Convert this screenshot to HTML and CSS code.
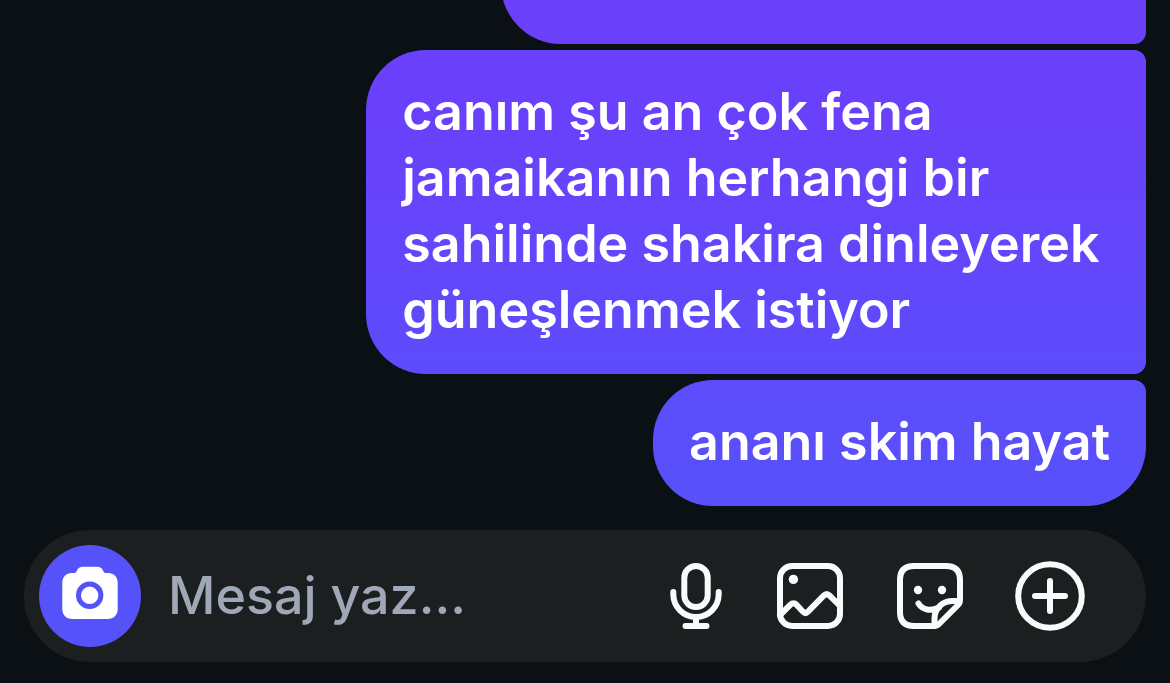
FILE: index.html
```
<!DOCTYPE html>
<html lang="tr">
<head>
    <meta charset="UTF-8">
    <meta name="viewport" content="width=device-width, initial-scale=1.0">
    <title>Mesajlar</title>
    <link rel="stylesheet" href="styles.css">
</head>
<body>
    <main class="chat">
        <div class="message previous"></div>
        <div class="message">canım şu an çok fena jamaikanın herhangi bir sahilinde shakira dinleyerek güneşlenmek istiyor</div>
        <div class="message last">ananı skim hayat</div>
    </main>

    <form class="composer">
        <button type="button" class="camera-btn" aria-label="Kamera">
            <svg width="60" height="60" viewBox="0 0 60 60">
                <path fill="#fff" d="M12 7h2c1.5 0 2-.5 2.7-2C18 2 20 .7 23 .7h14c3 0 5 1.3 6.3 4.3C44 6.500 44.500 7 46 7h2c6 0 9.700 4 9.700 10v26c0 6-4 10-10 10H12.300c-6 0-10-4-10-10V17C2.300 11 6 7 12 7z"/>
                <circle cx="29.700" cy="29.300" r="11.200" fill="none" stroke="#5652fa" stroke-width="5"/>
            </svg>
        </button>
        <input type="text" class="message-input" placeholder="Mesaj yaz..." aria-label="Mesaj yaz">
        <div class="actions">
            <button type="button" class="icon-btn" aria-label="Ses kaydı">
                <svg width="60" height="72" viewBox="0 0 60 72">
                    <rect x="18.300" y="6" width="23.400" height="41" rx="11.700"/>
                    <path d="M7.300 32v2.300a22.700 22.700 0 0 0 45.400 0V32M30 57v9M19.500 66h21"/>
                </svg>
            </button>
            <button type="button" class="icon-btn" aria-label="Fotoğraf">
                <svg width="72" height="72" viewBox="0 0 72 72">
                    <rect x="6" y="6" width="60" height="60" rx="12"/>
                    <circle class="dot" cx="19.400" cy="19.400" r="4.700"/>
                    <path d="M6 55l10.500-10.300q3-3 6 0l6.500 7q2.500 2.500 5 0l15.700-16q3-3 6 0L66 46"/>
                </svg>
            </button>
            <button type="button" class="icon-btn" aria-label="Çıkartma">
                <svg width="72" height="72" viewBox="0 0 72 72">
                    <path d="M66 40V20Q66 6 52 6H20Q6 6 6 20v32q0 14 14 14h21q2 0 3.500-1.500l20-20Q66 43 66 40z"/>
                    <path d="M65 41h-6c-11 0-18.500 7.500-18.500 18v6M24.500 43.500c4 6.500 12 8 20.500 4"/>
                    <circle class="dot" cx="24" cy="30" r="4.200"/>
                    <circle class="dot" cx="48" cy="30" r="4.200"/>
                </svg>
            </button>
            <button type="button" class="icon-btn" aria-label="Ekle">
                <svg width="72" height="72" viewBox="0 0 72 72">
                    <circle cx="36" cy="36" r="31.800"/>
                    <path d="M36 21v30M21 36h30"/>
                </svg>
            </button>
        </div>
    </form>
</body>
</html>
```
FILE: styles.css
```
* {
    box-sizing: border-box;
}
body {
    font-family: Inter, "Liberation Sans", sans-serif;
    font-size: 52px;
    font-weight: 600;
    line-height: 66px;
    margin: 0;
    padding: 0 24px 21px;
    height: 100vh;
    display: flex;
    flex-direction: column;
    gap: 24px;
    overflow: hidden;
    background-color: #0b1014;
    color: white;
}
.chat {
    flex: 1;
    min-height: 0;
    display: flex;
    flex-direction: column;
    justify-content: flex-end;
    align-items: flex-end;
    gap: 6px;
}
.message {
    flex-shrink: 0;
    max-width: 69.5%;
    padding: 29px 36px 31px;
    border-radius: 60px 12px 12px 60px;
    background: linear-gradient(#6b40fb, #6941fb 20%, #5c4dfb 58%, #5652fa 80%) fixed;
}
.previous {
    width: 57.5%;
    min-height: 126px;
}
.last {
    border-bottom-right-radius: 60px;
}
.composer {
    display: flex;
    align-items: center;
    padding: 15px 60px 15px 15px;
    border-radius: 66px;
    background-color: #1c1f20;
}
button {
    display: flex;
    align-items: center;
    justify-content: center;
    flex-shrink: 0;
    padding: 0;
    border: none;
    background: none;
    cursor: pointer;
}
.camera-btn {
    width: 102px;
    height: 102px;
    border-radius: 50%;
    background-color: #5652fa;
}
.message-input {
    flex: 1;
    min-width: 0;
    height: 66px;
    margin: 0 24px 0 27px;
    padding: 0;
    border: none;
    outline: none;
    background: none;
    color: white;
    font: inherit;
    font-weight: 500;
}
.message-input::placeholder {
    color: #a0a7b7;
    opacity: 1;
}
.actions {
    display: flex;
    gap: 48px;
}
.icon-btn svg {
    fill: none;
    stroke: #f9fafb;
    stroke-width: 6;
    stroke-linecap: round;
    stroke-linejoin: round;
}
.icon-btn .dot {
    fill: #f9fafb;
    stroke: none;
}
```
